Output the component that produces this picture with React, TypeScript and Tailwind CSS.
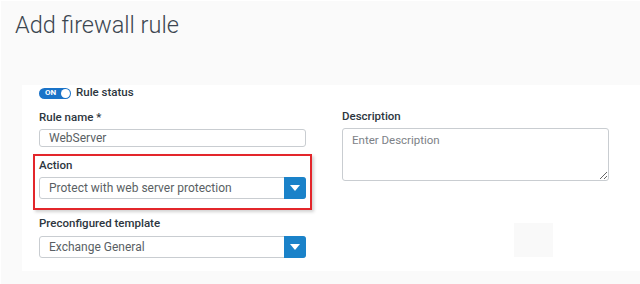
import React from "react";

const Caret = () => (
  <svg width="10" height="6" viewBox="0 0 10 6">
    <path d="M0 0 H10 L5 6 Z" fill="white" />
  </svg>
);

const Select = ({ value }: { value: string }) => (
  <div className="flex h-[22px] w-[267px] items-stretch rounded-[3px] border border-[#c9cdd1] bg-white">
    <div className="flex flex-1 items-center pl-[9px] text-[12px] text-[#5a5f64]">{value}</div>
    <div className="-my-px -mr-px flex w-[22px] items-center justify-center rounded-r-[3px] bg-[#1a82c9]">
      <Caret />
    </div>
  </div>
);

const Label = ({ children }: { children: React.ReactNode }) => (
  <div className="h-[14px] text-[11.5px] font-medium leading-[14px] text-[#2d3640]">{children}</div>
);

export default function App() {
  return (
    <div
      className="h-[284px] w-[640px] overflow-hidden border-l border-t border-white bg-[#fafafa]"
      style={{ fontFamily: "Roboto, 'Noto Sans', sans-serif" }}
    >
      <h1 className="pl-[14px] pt-[8px] text-[23.5px] font-light leading-[32px] text-[#3c4650]">
        Add firewall rule
      </h1>
      <div className="ml-[21px] mt-[44px] flex h-[186px] bg-white">
        {/* left column */}
        <div className="flex w-[300px] flex-col pl-[17px] pt-[2px]">
          <div className="flex h-[12px] items-center gap-[5px]">
            <div className="flex h-[11px] w-[32px] items-center justify-between rounded-full bg-[#1a73c8] pl-[6px] pr-px">
              <span className="text-[8px] font-bold leading-none text-white">ON</span>
              <span className="h-[9px] w-[9px] rounded-full bg-white" />
            </div>
            <span className="text-[11.5px] font-medium text-[#2d3640]">Rule status</span>
          </div>
          <div className="mt-[11px]">
            <Label>Rule name *</Label>
          </div>
          <div className="mt-[5px] flex h-[18px] w-[267px] items-center rounded-[3px] border border-[#c9cdd1] pl-[9px] text-[12px] text-[#5a5f64]">
            WebServer
          </div>
          <div className="-ml-[6px] mt-[7px] h-[56px] w-[279px] border-2 border-[#e3262b] px-[4px] pt-[2px] shadow-[2px_2px_3px_rgba(0,0,0,0.18)]">
            <Label>Action</Label>
            <div className="mt-[5px]">
              <Select value="Protect with web server protection" />
            </div>
          </div>
          <div className="mt-[6px]">
            <Label>Preconfigured template</Label>
          </div>
          <div className="mt-[6px]">
            <Select value="Exchange General" />
          </div>
        </div>
        {/* right column */}
        <div className="flex flex-col pl-[20px] pt-[24px]">
          <Label>Description</Label>
          <textarea
            readOnly
            placeholder="Enter Description"
            className="mt-[5px] h-[53px] w-[267px] rounded-[3px] border border-[#c9cdd1] px-[9px] py-[3px] text-[11.5px] placeholder:text-[#7d8287]"
          />
          <div className="ml-[172px] mt-[42px] h-[34px] w-[39px] bg-[#f9f9f9]" />
        </div>
      </div>
    </div>
  );
}
